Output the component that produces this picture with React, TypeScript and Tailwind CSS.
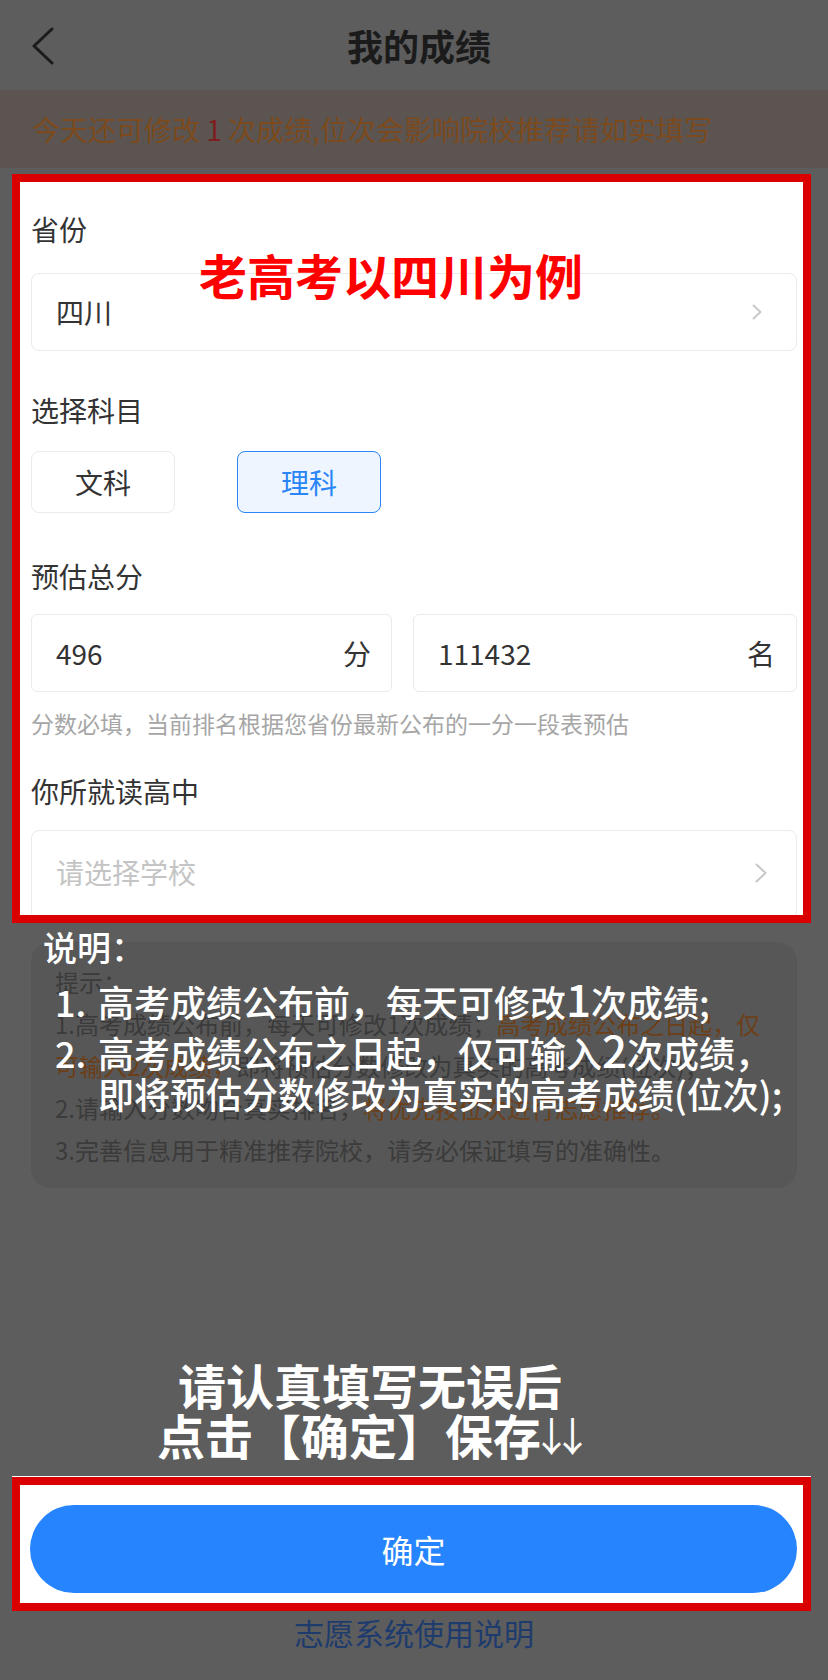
import React from "react";

function Chevron({ w = 10, h = 16 }: { w?: number; h?: number }) {
  return (
    <svg width={w} height={h} viewBox={`0 0 ${w} ${h}`} fill="none">
      <polyline
        points={`1.5,1.5 ${w - 1.5},${h / 2} 1.5,${h - 1.5}`}
        stroke="#c8c8c8"
        strokeWidth="2"
        strokeLinecap="round"
        strokeLinejoin="round"
      />
    </svg>
  );
}

export default function App() {
  return (
    <div className="relative w-[828px] h-[1680px] overflow-hidden bg-[#5d5d5d] font-['Noto_Sans_CJK_SC',sans-serif]">
      {/* header */}
      <div className="h-[90px] grid grid-cols-[1fr_auto_1fr] items-center">
        <div className="pl-[31px] pt-[2px] flex">
          <svg width="24" height="38" viewBox="0 0 24 38" fill="none">
            <polyline points="21,2 3,19 21,36" stroke="#1b1b1b" strokeWidth="3" strokeLinecap="round" strokeLinejoin="round" />
          </svg>
        </div>
        <div className="text-[36px] font-bold text-[#1b1b1b] leading-[48px] pl-[10px]">我的成绩</div>
        <div />
      </div>

      {/* notice */}
      <div className="h-[78px] bg-[#5b5451] pl-[32px] text-[28px] leading-[78px] text-[#7c4a1c] whitespace-pre">
        <span>今天还可修改 </span>
        <span className="text-[#7e1d1d]">1</span>
        <span> 次成绩,位次会影响院校推荐请如实填写</span>
      </div>

      {/* highlighted form */}
      <div className="mt-[6px] ml-[12px] w-[799px] h-[749px] border-[8px] border-[#db0000] bg-white relative overflow-hidden">
        <div className="pl-[11px] pr-[6px] pt-[27px] text-[#333333]">
          <div className="text-[28px] leading-[40px]">省份</div>
          <div className="mt-[24px] h-[78px] rounded-[8px] border-[1.5px] border-[#ebebeb] flex items-center justify-between pl-[24px] pr-[34px]">
            <span className="text-[28px]">四川</span>
            <Chevron w={10} h={16} />
          </div>

          <div className="mt-[39px] text-[28px] leading-[40px]">选择科目</div>
          <div className="mt-[21px] flex gap-[62px]">
            <div className="w-[144px] h-[62px] rounded-[8px] border-[1.5px] border-[#ebebeb] flex items-center justify-center text-[28px] text-[#333333]">
              文科
            </div>
            <div className="w-[144px] h-[62px] rounded-[8px] border-[1.5px] border-[#2a85f7] bg-[#eef5ff] flex items-center justify-center text-[28px] text-[#2a85f7]">
              理科
            </div>
          </div>

          <div className="mt-[43px] text-[28px] leading-[40px]">预估总分</div>
          <div className="mt-[18px] flex gap-[21px]">
            <div className="w-[361px] h-[78px] rounded-[6px] border-[1.5px] border-[#ebebeb] flex items-center justify-between pl-[24px] pr-[20px] text-[28px]">
              <span>496</span>
              <span>分</span>
            </div>
            <div className="flex-1 h-[78px] rounded-[6px] border-[1.5px] border-[#ebebeb] flex items-center justify-between pl-[24px] pr-[21px] text-[28px]">
              <span>111432</span>
              <span>名</span>
            </div>
          </div>
          <div className="mt-[16px] text-[23px] leading-[30px] text-[#a6a6a6] whitespace-nowrap">
            分数必填，当前排名根据您省份最新公布的一分一段表预估
          </div>

          <div className="mt-[33px] text-[28px] leading-[40px]">你所就读高中</div>
          <div className="mt-[19px] h-[90px] rounded-[8px] border-[1.5px] border-[#ebebeb] flex justify-between pl-[24px] pr-[29px] pt-[21px]">
            <span className="text-[28px] leading-[40px] text-[#c4c4c4]">请选择学校</span>
            <div className="pt-[11px]">
              <Chevron w={12} h={20} />
            </div>
          </div>
        </div>

        <div className="absolute left-[179px] top-[68px] text-[48px] leading-[48px] font-bold text-[#ff0000] whitespace-nowrap">
          老高考以四川为例
        </div>
      </div>

      {/* tips card with annotation */}
      <div className="relative pt-[19px]">
        <div className="ml-[31px] w-[766px] h-[246px] rounded-[20px] bg-[#575757] pt-[19px] pl-[24px] text-[24px] leading-[42px] text-[#3b3b3b] whitespace-nowrap">
          <div>提示：</div>
          <div>
            1.高考成绩公布前，每天可修改1次成绩；<span className="text-[#6c3f17]">高考成绩公布之日起，仅</span>
          </div>
          <div>
            <span className="text-[#6c3f17]">可输入2次成绩，</span>即将预估分数修改为真实的高考成绩(位次)；
          </div>
          <div>
            2.请输入分数吻合真实排名，<span className="text-[#6c3f17]">将优先按位次进行志愿推荐。</span>
          </div>
          <div>3.完善信息用于精准推荐院校，请务必保证填写的准确性。</div>
        </div>

        <div className="absolute left-[43px] top-[4px] text-white font-medium whitespace-nowrap">
          <div className="text-[34px] leading-[40px]">说明：</div>
          <div className="mt-[9px] text-[36px] leading-[44px] pl-[12px]">
            <span className="inline-block w-[43px]">1.</span>高考成绩公布前，每天可修改<span className="text-[44px]">1</span>次成绩;
          </div>
          <div className="mt-[6px] text-[36px] leading-[41px] pl-[12px]">
            <span className="inline-block w-[43px]">2.</span>高考成绩公布之日起，仅可输入<span className="text-[44px]">2</span>次成绩，
          </div>
          <div className="text-[36px] leading-[41px] pl-[55px]">即将预估分数修改为真实的高考成绩(位次);</div>
        </div>
      </div>

      {/* annotation 2 */}
      <div className="mt-[171px] w-[740px] text-white text-[48px] leading-[50px] font-bold whitespace-nowrap">
        <div className="h-[50px] flex justify-center items-center">
          <span>请认真填写无误后</span>
        </div>
        <div className="h-[50px] flex justify-center items-center">
          <span>点击【确定】保存</span>
          <span className="flex w-[21px] justify-center font-normal text-[40px]">↓</span>
          <span className="flex w-[21px] justify-center font-normal text-[40px]">↓</span>
        </div>
      </div>

      {/* highlighted button */}
      <div className="mt-[17px] ml-[12px] w-[799px] bg-white pt-[1px]">
        <div className="border-[8px] border-[#db0000] bg-white pt-[20px] pb-[10px] pl-[10px] pr-[6px]">
          <div className="h-[88px] rounded-full bg-[#2684fe] flex items-center justify-center text-white text-[32px]">
            确定
          </div>
        </div>
      </div>

      <div className="mt-[1px] text-center text-[30px] leading-[40px] text-[#1e3b6d]">志愿系统使用说明</div>
    </div>
  );
}
